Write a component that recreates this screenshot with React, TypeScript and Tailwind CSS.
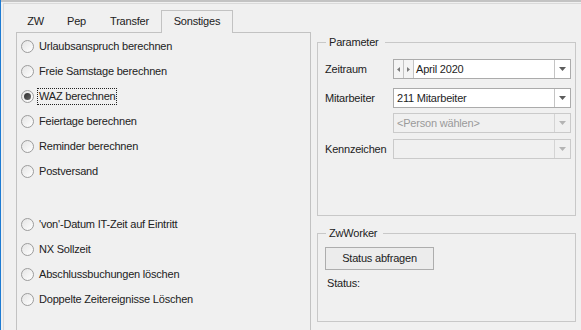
import React from 'react';

const font = { fontFamily: '"Liberation Sans", Arial, sans-serif' };

const Arrow: React.FC<{ disabled?: boolean }> = ({ disabled }) => (
  <svg width="7" height="4" viewBox="0 0 7 4">
    <polygon points="0,0 7,0 3.5,4" fill={disabled ? '#b4b4b4' : '#5c5c5c'} />
  </svg>
);

const Combo: React.FC<{ text?: string; disabled?: boolean; spinner?: boolean; className?: string }> = ({
  text,
  disabled,
  spinner,
  className = '',
}) => (
  <div
    className={`flex h-[20px] w-[178px] shrink-0 border ${
      disabled ? 'border-[#cacaca] bg-[#f0f0f0] text-[#9a9a9a]' : 'border-[#ababab] bg-white text-[#1e1e1e]'
    } ${className}`}
  >
    {spinner && (
      <>
        <div className="flex w-[10px] items-center justify-center border-r border-[#c4c4c4] bg-[#f4f4f4]">
          <svg width="3" height="5" viewBox="0 0 3 5">
            <polygon points="3,0 3,5 0,2.5" fill="#7a7a7a" />
          </svg>
        </div>
        <div className="flex w-[10px] items-center justify-center border-r border-[#c4c4c4] bg-[#f4f4f4]">
          <svg width="3" height="5" viewBox="0 0 3 5">
            <polygon points="0,0 0,5 3,2.5" fill="#7a7a7a" />
          </svg>
        </div>
      </>
    )}
    <div className={`flex flex-1 items-center ${spinner ? 'pl-[2px]' : 'pl-[3px]'}`}>{text}</div>
    <div className={`flex w-[16px] items-center justify-center border-l ${disabled ? 'border-[#d4d4d4]' : 'border-[#c4c4c4]'}`}>
      <Arrow disabled={disabled} />
    </div>
  </div>
);

const Radio: React.FC<{ label: string; checked?: boolean }> = ({ label, checked }) => (
  <div className="flex h-[25px] items-center">
    <div className="flex h-[13px] w-[13px] items-center justify-center rounded-full border border-[#9c9c9c] bg-gradient-to-br from-[#e4e4e4] to-white">
      {checked && <div className="h-[7px] w-[7px] rounded-full bg-gradient-to-br from-[#2e2e2e] to-[#6a6a6a]" />}
    </div>
    <span
      className={`ml-[3px] flex h-[17px] items-center px-px border border-dotted ${
        checked ? 'border-[#222]' : 'border-transparent'
      }`}
    >
      {label}
    </span>
  </div>
);

const Row: React.FC<{ label: string; className?: string; children: React.ReactNode }> = ({ label, className = '', children }) => (
  <div className={`flex items-center ${className}`}>
    <div className="w-[75px] shrink-0 pl-[7px]">{label}</div>
    {children}
  </div>
);

const App: React.FC = () => {
  const firstGroup = [
    'Urlaubsanspruch berechnen',
    'Freie Samstage berechnen',
    'WAZ berechnen',
    'Feiertage berechnen',
    'Reminder berechnen',
    'Postversand',
  ];
  const secondGroup = ["'von'-Datum IT-Zeit auf Eintritt", 'NX Sollzeit', 'Abschlussbuchungen löschen', 'Doppelte Zeitereignisse Löschen'];

  return (
    <div
      className="flex h-[330px] w-[581px] overflow-hidden bg-[#f0f0f0] text-[11px] leading-[13px] tracking-[-0.2px] text-[#222]"
      style={font}
    >
      <div className="w-px bg-[#1e7bd2]" />
      <div className="flex flex-1 flex-col border-t-2 border-[#c3c3c3] pl-[2px] pt-px">
        <div className="flex flex-1 border-l border-t border-[#dadada]">
          {/* tab control */}
          <div className="ml-[12px] flex w-[295px] flex-col pt-[6px]">
            <div className="flex h-[22px] items-end">
              <div className="flex h-[22px] w-[39px] items-center justify-center">ZW</div>
              <div className="flex h-[22px] w-[43px] items-center justify-center">Pep</div>
              <div className="flex h-[22px] w-[63px] items-center justify-center">Transfer</div>
              <div className="relative z-10 -mb-px flex h-[23px] w-[72px] items-center justify-center border-x border-t border-[#c2c2c2] bg-[#f0f0f0] pb-px">
                Sonstiges
              </div>
            </div>
            <div className="flex flex-1 flex-col border-x border-t border-[#c2c2c2] pl-[4px] pt-px">
              {firstGroup.map((l) => (
                <Radio key={l} label={l} checked={l === 'WAZ berechnen'} />
              ))}
              <div className="h-[28px]" />
              {secondGroup.map((l) => (
                <Radio key={l} label={l} />
              ))}
            </div>
          </div>

          {/* right side */}
          <div className="ml-[6px] flex w-[259px] flex-col pt-[32px]">
            <fieldset className="h-[180px] border border-[#c8c8c8]">
              <legend className="ml-[8px] pl-[3px] pr-[6px] leading-[13px]">Parameter</legend>
              <Row label="Zeitraum" className="mt-[10px]">
                <Combo text="April 2020" spinner />
              </Row>
              <Row label="Mitarbeiter" className="mt-[9px]">
                <Combo text="211 Mitarbeiter" />
              </Row>
              <Row label="" className="mt-[5px]">
                <Combo text="<Person wählen>" disabled />
              </Row>
              <Row label="Kennzeichen" className="mt-[6px]">
                <Combo disabled />
              </Row>
            </fieldset>
            <fieldset className="mt-[11px] h-[95px] border border-[#c8c8c8]">
              <legend className="ml-[8px] pl-[3px] pr-[6px] leading-[13px]">ZwWorker</legend>
              <button className="ml-[7px] mt-[7px] flex h-[23px] w-[109px] items-center justify-center border border-[#adadad] bg-[#ececec]">
                Status abfragen
              </button>
              <div className="ml-[9px] mt-[7px]">Status:</div>
            </fieldset>
          </div>
        </div>
      </div>
    </div>
  );
};

export default App;
